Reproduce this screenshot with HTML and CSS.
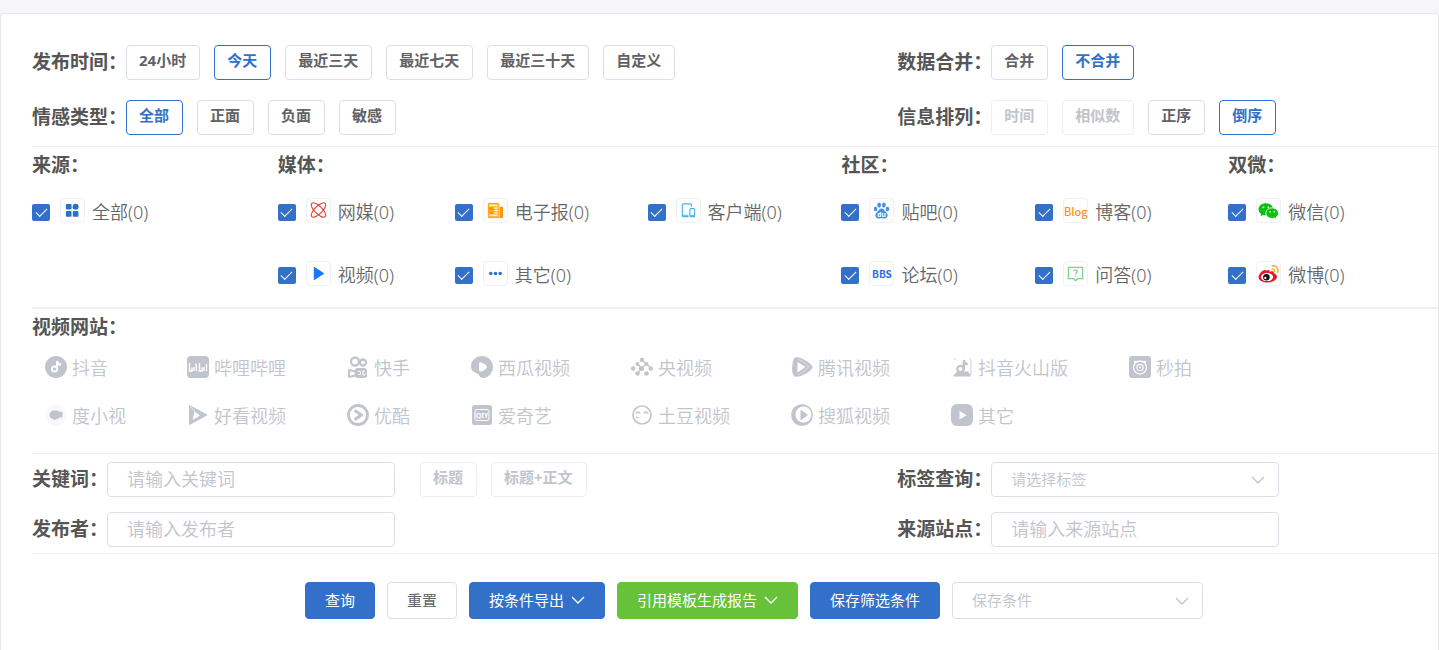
FILE: index.html
```html
<!DOCTYPE html>
<html lang="zh-CN">

<head>
    <meta charset="UTF-8">
    <title>舆情筛选</title>
    <link rel="stylesheet" href="styles.css">
</head>

<body>
    <main class="card">
        <!-- 时间 / 情感 / 排序 -->
        <section class="section filters">
            <div class="row">
                <span class="label">发布时间：</span>
                <div class="btn-group">
                    <button class="tag-btn" type="button">24小时</button>
                    <button class="tag-btn active" type="button">今天</button>
                    <button class="tag-btn" type="button">最近三天</button>
                    <button class="tag-btn" type="button">最近七天</button>
                    <button class="tag-btn" type="button">最近三十天</button>
                    <button class="tag-btn" type="button">自定义</button>
                </div>
            </div>
            <div class="row">
                <span class="label">数据合并：</span>
                <div class="btn-group">
                    <button class="tag-btn" type="button">合并</button>
                    <button class="tag-btn active" type="button">不合并</button>
                </div>
            </div>
            <div class="row">
                <span class="label">情感类型：</span>
                <div class="btn-group">
                    <button class="tag-btn active" type="button">全部</button>
                    <button class="tag-btn" type="button">正面</button>
                    <button class="tag-btn" type="button">负面</button>
                    <button class="tag-btn" type="button">敏感</button>
                </div>
            </div>
            <div class="row">
                <span class="label">信息排列：</span>
                <div class="btn-group">
                    <button class="tag-btn" type="button" disabled>时间</button>
                    <button class="tag-btn" type="button" disabled>相似数</button>
                    <button class="tag-btn" type="button">正序</button>
                    <button class="tag-btn active" type="button">倒序</button>
                </div>
            </div>
        </section>

        <!-- 来源 -->
        <section class="section sources">
            <h2 class="title">来源：</h2>
            <h2 class="title span-3">媒体：</h2>
            <h2 class="title span-2">社区：</h2>
            <h2 class="title">双微：</h2>

            <label class="source col-1">
                <input type="checkbox" checked>
                <span class="icon-box">
                    <svg viewBox="0 0 18 18" fill="#2a6fd0"><rect x="2" y="2" width="6" height="6" rx="1"/><circle cx="12.300" cy="5" r="3.200"/><rect x="2" y="9.500" width="6" height="6" rx="1"/><rect x="9.300" y="9.500" width="6" height="6" rx="1"/></svg>
                </span>
                <span>全部(0)</span>
            </label>
            <label class="source col-2">
                <input type="checkbox" checked>
                <span class="icon-box">
                    <svg viewBox="0 0 18 18" fill="none" stroke="#e5432f" stroke-width="1.200"><ellipse cx="9" cy="8.500" rx="10" ry="4" transform="rotate(45 9 8.500)"/><ellipse cx="9" cy="8.500" rx="10" ry="4" transform="rotate(-45 9 8.500)"/></svg>
                </span>
                <span>网媒(0)</span>
            </label>
            <label class="source col-3">
                <input type="checkbox" checked>
                <span class="icon-box">
                    <svg viewBox="0 0 18 18"><path d="M1 1h11.500v16H2a1 1 0 0 1-1-1z" fill="#ffc04d"/><path d="M13.500 5H17v11a1 1 0 0 1-1 1h-2.500z" fill="#ff9800"/><path d="M2.500 3.500h8.500M2.500 14h8.500" stroke="#fff" stroke-width="1"/><path d="M2.500 5.500H7V9H2.500zM2.500 10H7v2.500H2.500z" fill="#ff9000"/><path d="M8 6.500h3M8 9h3M8 11.500h3" stroke="#fff" stroke-width="1"/><path d="M1.500 1.500h11v15h-11z" fill="none" stroke="#ffa11a"/></svg>
                </span>
                <span>电子报(0)</span>
            </label>
            <label class="source col-4">
                <input type="checkbox" checked>
                <span class="icon-box">
                    <svg viewBox="0 0 18 18" fill="none" stroke="#49b3e8" stroke-width="1.200"><path d="M12 5V3a1 1 0 0 0-1-1H3.500a1 1 0 0 0-1 1v11.500a1 1 0 0 0 1 1H9M2.500 14H9"/><rect x="10.500" y="7" width="5" height="8.500" rx="1"/><path d="M10.500 14.500h5"/></svg>
                </span>
                <span>客户端(0)</span>
            </label>
            <label class="source col-5">
                <input type="checkbox" checked>
                <span class="icon-box">
                    <svg viewBox="0 0 18 18" fill="#4a90e2"><ellipse cx="6.500" cy="3.200" rx="2" ry="2.800"/><ellipse cx="11.500" cy="3.200" rx="2" ry="2.800"/><ellipse cx="2.700" cy="7.500" rx="1.900" ry="2.400"/><ellipse cx="15.300" cy="7.500" rx="1.900" ry="2.400"/><path d="M9 7c2.500 0 3 2.200 4.800 3.800 1.700 1.500 2.200 3.200 1.200 5-1.200 2-3.500 1.500-6 1.500s-4.800.500-6-1.500c-1-1.800-.500-3.500 1.200-5C6 9.200 6.500 7 9 7z"/><text x="9" y="15.500" text-anchor="middle" font-size="7" font-weight="700" fill="#fff">du</text></svg>
                </span>
                <span>贴吧(0)</span>
            </label>
            <label class="source col-6">
                <input type="checkbox" checked>
                <span class="icon-box blog">Blog</span>
                <span>博客(0)</span>
            </label>
            <label class="source col-7">
                <input type="checkbox" checked>
                <span class="icon-box">
                    <svg class="wide" viewBox="0 0 20 20" fill="#0fbf0f"><path d="M7.500 3C3.500 3 .500 5.500.500 8.800c0 1.800 1 3.400 2.500 4.500l-.600 2.200 2.500-1.300c.800.200 1.700.400 2.600.400 4 0 7-2.600 7-5.800S11.500 3 7.500 3z"/><path d="M13.500 7.500c-3.400 0-6 2.200-6 5s2.600 5 6 5c.800 0 1.500-.100 2.200-.300l2 1.100-.500-1.800c1.400-.900 2.300-2.300 2.300-4 0-2.800-2.600-5-6-5z" stroke="#fff" stroke-width=".8"/><g fill="#fff"><circle cx="5.200" cy="7" r=".9"/><circle cx="9.800" cy="7" r=".9"/><circle cx="11.500" cy="11.200" r=".8"/><circle cx="15.500" cy="11.200" r=".8"/></g></svg>
                </span>
                <span>微信(0)</span>
            </label>

            <label class="source col-2">
                <input type="checkbox" checked>
                <span class="icon-box">
                    <svg viewBox="0 0 18 18"><path d="M4.500 2.500v13l10-6.500z" fill="#1677ff" stroke="#1677ff" stroke-linejoin="round"/></svg>
                </span>
                <span>视频(0)</span>
            </label>
            <label class="source col-3">
                <input type="checkbox" checked>
                <span class="icon-box">
                    <svg viewBox="0 0 18 18" fill="#3472c8"><circle cx="4" cy="9" r="1.900"/><circle cx="9" cy="9" r="1.900"/><circle cx="14" cy="9" r="1.900"/></svg>
                </span>
                <span>其它(0)</span>
            </label>
            <label class="source col-5">
                <input type="checkbox" checked>
                <span class="icon-box bbs">BBS</span>
                <span>论坛(0)</span>
            </label>
            <label class="source col-6">
                <input type="checkbox" checked>
                <span class="icon-box">
                    <svg viewBox="0 0 18 18" fill="none" stroke="#7fcf86" stroke-width="1.300"><path d="M1.500 2.500h15v12h-5L9 16.500l-2-2H1.500z"/><path d="M7 6.700C7 4.500 11 4.500 11 6.700c0 1.400-2 1.400-2 3.200M9 11v1.300"/></svg>
                </span>
                <span>问答(0)</span>
            </label>
            <label class="source col-7">
                <input type="checkbox" checked>
                <span class="icon-box">
                    <svg class="wide" viewBox="0 0 20 20"><path d="M8 7.200c1.500-.900 3.200-.900 3 1.200 2-.800 4.500-.900 4 1.400 1.800.500 3 1.500 3 3.200 0 3.200-4.200 5.500-9 5.500S.500 16.300.500 13.500C.500 10.500 5.500 5 8 7.200z" fill="#e6162d"/><ellipse cx="8.600" cy="13.400" rx="5.800" ry="3.800" fill="#fff"/><circle cx="8" cy="13.500" r="3.100" fill="#111"/><circle cx="7" cy="14.300" r="1.100" fill="#fff"/><path d="M13.500 2.800c3.800-.600 6.300 2.500 5.300 6M13.500 5.800c1.800-.300 2.800 1 2.400 2.600" fill="none" stroke="#f9b13a" stroke-width="1.500" stroke-linecap="round"/></svg>
                </span>
                <span>微博(0)</span>
            </label>
        </section>

        <!-- 视频网站 -->
        <section class="section">
            <h2 class="title">视频网站：</h2>
            <div class="sites">
                <button class="site" type="button" disabled>
                    <svg viewBox="0 0 22 22"><circle cx="11" cy="11" r="11"/><circle cx="9.500" cy="13" r="2.600" fill="none" stroke="#fff" stroke-width="2"/><path d="M12.100 13V5c.300 2.300 1.700 3.600 4 3.800" fill="none" stroke="#fff" stroke-width="2"/></svg>
                    抖音
                </button>
                <button class="site" type="button" disabled>
                    <svg viewBox="0 0 22 22"><rect width="22" height="22" rx="4"/><path d="M2.500 7v8h2.500v-3.500M7 11v4M9 7.500l.500 7.500M12.500 7v8H15v-3.500M17 11v4M19.500 8v7" fill="none" stroke="#fff" stroke-width="1.400"/></svg>
                    哔哩哔哩
                </button>
                <button class="site" type="button" disabled>
                    <svg viewBox="0 0 22 22"><g fill="none" stroke="#c0c4cc" stroke-width="2.300"><circle cx="8" cy="5.500" r="4"/><circle cx="16" cy="6.500" r="3"/></g><rect x="8" y="12" width="12" height="10" rx="2.500"/><path d="M2 14l6.500 1.500v4L2 21z" fill="#fff" stroke="#c0c4cc" stroke-width="1.800" stroke-linejoin="round"/><path d="M11 15.500h2.500v3H11M18 15h-2v4h2v-1.500" fill="none" stroke="#fff" stroke-width="1"/></svg>
                    快手
                </button>
                <button class="site" type="button" disabled>
                    <svg viewBox="0 0 22 22"><path d="M11 0a11 11 0 0 1 11 11c0 6-5 11-10 11-4 0-3-3-6-4.500S0 15 0 10.500C0 4.500 5 0 11 0z"/><path d="M8 8c0-2 1.500-2 3.500-1s4.500 2.500 4.500 4-2.500 3-4.500 4S8 15.500 8 13.500z" fill="#fff"/></svg>
                    西瓜视频
                </button>
                <button class="site" type="button" disabled>
                    <svg viewBox="0 0 22 22"><g><circle cx="11" cy="4" r="2.200"/><circle cx="6.500" cy="8" r="2"/><circle cx="15.500" cy="8" r="2"/><circle cx="2.200" cy="12.500" r="2.200"/><circle cx="10.500" cy="12.500" r="2.500"/><circle cx="19.800" cy="12.500" r="2.200"/><circle cx="6.500" cy="17.500" r="2.300"/><circle cx="15.500" cy="17.500" r="2.300"/></g><path d="M11 4l4.500 4-5 4.500-4 4.500M15.500 8l4.500 4.500M6.500 8l4 4.500" fill="none" stroke="#c0c4cc" stroke-width="1.400"/></svg>
                    央视频
                </button>
                <button class="site" type="button" disabled>
                    <svg viewBox="0 0 22 22"><path d="M4 1.500C9 0 21 7.500 21.500 11S9 22 4 20.500 1.500 2.500 4 1.500z"/><path d="M6.500 6v10.500L14.500 11z" fill="#fff"/><path d="M8 3.500c3 1 7.500 4.500 9.500 7.500-2 3-6.500 6-10 7.500" fill="none" stroke="#fff" stroke-width=".5"/></svg>
                    腾讯视频
                </button>
                <button class="site" type="button" disabled>
                    <svg viewBox="0 0 22 22"><path d="M2 20.500l4-5h11l3 5z"/><path d="M3 4l2-1.500M18 3c1.500 0 2 1 2 3v12.500H3" fill="none" stroke="#c0c4cc" stroke-width=".8"/><circle cx="9.500" cy="13" r="3.200" fill="#fff" stroke="#c0c4cc" stroke-width="2.300"/><path d="M12.800 14V4c.300 2.600 1.700 4 4 4.200" fill="none" stroke="#c0c4cc" stroke-width="2.300"/></svg>
                    抖音火山版
                </button>
                <button class="site" type="button" disabled>
                    <svg viewBox="0 0 22 22"><rect width="22" height="22" rx="3"/><g fill="none" stroke="#fff"><circle cx="11" cy="11.500" r="6.500" stroke-width="1.300"/><circle cx="11" cy="11.500" r="3.200" stroke-width="1.200"/><path d="M5.500 7.500V5L8 6M16.500 7.500V5L14 6"/></g><circle cx="11" cy="11.500" r="1" fill="#fff"/></svg>
                    秒拍
                </button>
                <button class="site" type="button" disabled>
                    <svg viewBox="0 0 22 22"><circle cx="11" cy="11" r="10.500" fill="#f8f9fa"/><path d="M9.500 6.500c3 0 4.500.500 5.500 1.500l2.500-.5v6L15.500 13c-1 1.500-3 2-4.500 2.200L8.500 16.500V15C5.500 14.500 4.500 13 4.500 11s1.500-4.500 5-4.500z"/></svg>
                    度小视
                </button>
                <button class="site" type="button" disabled>
                    <svg viewBox="0 0 22 22"><path d="M2.500 1.500l17.500 9.500-17.500 9.500z" stroke="#c0c4cc" stroke-linejoin="round"/><path d="M7.500 7.500l5.500 4-7.500 4.500z" fill="#fff"/><path d="M3.500 2.500L8 8" stroke="#fff" stroke-width=".7"/></svg>
                    好看视频
                </button>
                <button class="site" type="button" disabled>
                    <svg viewBox="0 0 22 22"><circle cx="11" cy="11" r="9.500" fill="none" stroke="#c0c4cc" stroke-width="2.800"/><path d="M8.500 7l6 4-6 4" fill="none" stroke="#c0c4cc" stroke-width="3" stroke-linecap="round" stroke-linejoin="round"/></svg>
                    优酷
                </button>
                <button class="site" type="button" disabled>
                    <svg viewBox="0 0 22 22"><rect x="1" y="1" width="20" height="20" rx="2.500"/><rect x="4" y="5.500" width="14" height="11" rx="2" fill="none" stroke="#fff" stroke-width="1"/><text x="11" y="13.500" text-anchor="middle" font-size="7" font-weight="700" fill="#fff">QIY</text></svg>
                    爱奇艺
                </button>
                <button class="site" type="button" disabled>
                    <svg viewBox="0 0 22 22"><g fill="none" stroke="#c0c4cc" stroke-width="1.600"><circle cx="11" cy="11" r="9"/><path d="M5 9.500c.500-2 3-2 4 0M13 9.500c.500-2 3-2 4 0M5.500 12.500c0 1.500 1 1.500 2 1" stroke-width="1.300"/></g></svg>
                    土豆视频
                </button>
                <button class="site" type="button" disabled>
                    <svg viewBox="0 0 22 22"><circle cx="11" cy="11" r="10.800"/><circle cx="12.500" cy="10.500" r="8" fill="#fff"/><path d="M9.500 5.500v11l7.500-5.500z"/></svg>
                    搜狐视频
                </button>
                <button class="site" type="button" disabled>
                    <svg viewBox="0 0 22 22"><rect width="22" height="22" rx="6"/><path d="M8.500 7v8.500l7-4.200z" fill="#fff"/></svg>
                    其它
                </button>
            </div>
        </section>

        <!-- 关键词 / 标签 -->
        <section class="section fields">
            <div class="row">
                <label class="label" for="keyword">关键词：</label>
                <input class="text-input" type="text" id="keyword" placeholder="请输入关键词">
                <div class="btn-group scope">
                    <button class="tag-btn" type="button" disabled>标题</button>
                    <button class="tag-btn" type="button" disabled>标题+正文</button>
                </div>
            </div>
            <div class="row">
                <label class="label" for="tag">标签查询：</label>
                <div class="select-box">
                    <select id="tag">
                        <option>请选择标签</option>
                    </select>
                    <svg class="arrow" viewBox="0 0 14 14"><path d="M1 4l6 6 6-6"/></svg>
                </div>
            </div>
            <div class="row">
                <label class="label" for="author">发布者：</label>
                <input class="text-input" type="text" id="author" placeholder="请输入发布者">
            </div>
            <div class="row">
                <label class="label" for="site">来源站点：</label>
                <input class="text-input" type="text" id="site" placeholder="请输入来源站点">
            </div>
        </section>

        <div class="actions">
            <button class="btn primary" type="button">查询</button>
            <button class="btn" type="button">重置</button>
            <button class="btn primary" type="button">按条件导出
                <svg class="arrow" viewBox="0 0 14 14"><path d="M1 4l6 6 6-6"/></svg>
            </button>
            <button class="btn success" type="button">引用模板生成报告
                <svg class="arrow" viewBox="0 0 14 14"><path d="M1 4l6 6 6-6"/></svg>
            </button>
            <button class="btn primary" type="button">保存筛选条件</button>
            <div class="select-box save">
                <select aria-label="保存条件">
                    <option>保存条件</option>
                </select>
                <svg class="arrow" viewBox="0 0 14 14"><path d="M1 4l6 6 6-6"/></svg>
            </div>
        </div>
    </main>
</body>

</html>
```
FILE: styles.css
```css
* {
    box-sizing: border-box;
}

body {
    margin: 0;
    padding-top: 13px;
    background-color: #f5f5fa;
    color: #606266;
    font-family: "Noto Sans", "Noto Sans CJK SC", sans-serif;
}

button,
input,
select {
    font-family: inherit;
}

.card {
    min-height: calc(100vh - 13px);
    padding: 31px 0 31px 31px;
    background-color: #fff;
    border: 1px solid #e8e8ec;
    border-bottom: none;
    border-radius: 4px 4px 0 0;
}

.section {
    border-bottom: 1px solid #eee;
}

.filters,
.fields {
    display: grid;
    grid-template-columns: 8fr 5fr;
}

.filters {
    row-gap: 20px;
    padding-bottom: 11px;
}

.fields {
    row-gap: 15px;
    padding: 8px 0 6px;
}

.row {
    display: flex;
    align-items: center;
}

.label,
.title {
    color: #555;
    font-size: 19px;
    font-weight: bold;
    white-space: nowrap;
}

.label {
    line-height: 35px;
    margin-right: -1px;
}

.title {
    margin: 0;
    padding-top: 2px;
    line-height: 32px;
}

/* tag buttons */
.btn-group {
    display: flex;
    gap: 14px;
}

.scope {
    margin-left: 25px;
}

.tag-btn {
    height: 35px;
    padding: 0 13px 4px 12px;
    background-color: #fff;
    border: 1px solid #dcdfe6;
    border-radius: 4px;
    color: #606266;
    font-size: 15px;
    font-weight: bold;
    line-height: 29px;
    white-space: nowrap;
    cursor: pointer;
}

.tag-btn.active {
    border-color: #3370c9;
    color: #3370c9;
}

.tag-btn:disabled {
    border-color: #ebeef5;
    color: #c0c4cc;
    cursor: not-allowed;
}

/* sources */
.sources {
    display: grid;
    grid-template-columns: 246fr 177fr 193fr 194fr 194fr 193fr 210fr;
    border-bottom-width: 2px;
}

.span-2 {
    grid-column: span 2;
}

.span-3 {
    grid-column: span 3;
}

.col-1 { grid-column: 1; }
.col-2 { grid-column: 2; }
.col-3 { grid-column: 3; }
.col-4 { grid-column: 4; }
.col-5 { grid-column: 5; }
.col-6 { grid-column: 6; }
.col-7 { grid-column: 7; }

.source {
    display: flex;
    align-items: center;
    height: 63px;
    padding-bottom: 1px;
    color: #666;
    font-size: 18px;
    font-weight: 350;
    line-height: 24px;
    white-space: nowrap;
    cursor: pointer;
}

.source input {
    display: grid;
    place-content: center;
    appearance: none;
    width: 18px;
    height: 17px;
    margin: 0 10px 0 0;
    background-color: #3370c9;
    border-radius: 2px;
}

.source input:checked::before {
    content: "";
    width: 10px;
    height: 5px;
    margin-bottom: 3px;
    border-left: 1px solid #fff;
    border-bottom: 1px solid #fff;
    transform: rotate(-45deg);
}

.icon-box {
    display: flex;
    align-items: center;
    justify-content: center;
    width: 25px;
    height: 25px;
    margin: 0 7px 3px 0;
    border: 1px solid #f0f1f6;
    border-radius: 4px;
    font-size: 11px;
    font-weight: 500;
}

.icon-box svg {
    width: 17px;
    height: 17px;
}

.icon-box svg.wide {
    flex: none;
    width: 21px;
    height: 21px;
}

.blog {
    color: #ff9320;
    font-family: "Noto Sans CJK SC", sans-serif;
}

.bbs {
    color: #1f70e0;
    font-family: "Noto Sans CJK SC", sans-serif;
    font-size: 10px;
    font-weight: bold;
}

/* video sites */
.sites {
    display: grid;
    grid-template-columns: repeat(8, max-content);
    column-gap: 61px;
    padding: 0 0 14px 13px;
}

.site {
    display: flex;
    align-items: center;
    gap: 5px;
    height: 48px;
    padding: 0;
    background: none;
    border: none;
    color: #c0c4cc;
    font-size: 18px;
    font-weight: 350;
    cursor: not-allowed;
}

.site svg {
    width: 22px;
    height: 22px;
    fill: #c0c4cc;
}

/* inputs */
.text-input,
.select-box {
    width: 288px;
    height: 35px;
}

.text-input,
.select-box select {
    padding: 0 19px 2px;
    background-color: #fff;
    border: 1px solid #dcdfe6;
    border-radius: 4px;
    outline: none;
}

.text-input {
    font-size: 18px;
    font-weight: 350;
}

.text-input::placeholder {
    color: #c0c4cc;
    opacity: 1;
}

.select-box {
    position: relative;
}

.select-box select {
    appearance: none;
    width: 100%;
    height: 100%;
    color: #c0c4cc;
    font-size: 15px;
    font-weight: 350;
}

.arrow {
    width: 14px;
    height: 14px;
    fill: none;
    stroke: currentColor;
    stroke-width: 1.3;
}

.select-box .arrow {
    position: absolute;
    top: 50%;
    right: 14px;
    margin-top: -7px;
    color: #c0c4cc;
    pointer-events: none;
}

/* bottom buttons */
.actions {
    display: flex;
    justify-content: center;
    gap: 12px;
    padding: 28px 0 0 38px;
}

.btn {
    display: flex;
    align-items: center;
    gap: 7px;
    height: 37px;
    padding: 0 19px 2px;
    background-color: #fff;
    border: 1px solid #dcdfe6;
    border-radius: 4px;
    color: #606266;
    font-size: 15px;
    white-space: nowrap;
    cursor: pointer;
}

.btn.primary {
    background-color: #3370c9;
    border-color: #3370c9;
    color: #fff;
}

.btn.success {
    background-color: #67c23a;
    border-color: #67c23a;
    color: #fff;
}

.select-box.save {
    width: 251px;
    height: 37px;
}
```
